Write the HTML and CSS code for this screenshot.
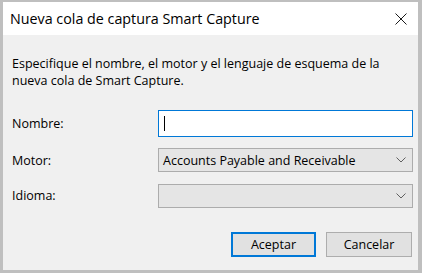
FILE: index.html
```html
<!DOCTYPE html>
<html lang="es">
<head>
    <meta charset="UTF-8">
    <title>Nueva cola de captura Smart Capture</title>
    <link rel="stylesheet" href="styles.css">
</head>
<body>
    <div class="dialog">
        <div class="titlebar">
            <span class="title">Nueva cola de captura Smart Capture</span>
            <button class="close-button" aria-label="Cerrar">
                <svg width="12" height="12" viewBox="0 0 12 12">
                    <path d="M0.5 0.5 L11.5 11.5 M11.5 0.5 L0.5 11.5" stroke="#1a1a1a" stroke-width="1" fill="none"/>
                </svg>
            </button>
        </div>

        <div class="content">
            <p class="description">Especifique el nombre, el motor y el lenguaje de esquema de la nueva cola de Smart Capture.</p>

            <div class="form">
                <label class="form-label" for="name-input">Nombre:</label>
                <div class="text-input" id="name-input"><span class="caret"></span></div>

                <label class="form-label">Motor:</label>
                <div class="select">
                    <span class="select-value">Accounts Payable and Receivable</span>
                    <svg class="chevron" width="10" height="6" viewBox="0 0 10 6">
                        <path d="M0.5 0.5 L5 5 L9.5 0.5" stroke="#606060" stroke-width="1" fill="none"/>
                    </svg>
                </div>

                <label class="form-label">Idioma:</label>
                <div class="select">
                    <span class="select-value"></span>
                    <svg class="chevron" width="10" height="6" viewBox="0 0 10 6">
                        <path d="M0.5 0.5 L5 5 L9.5 0.5" stroke="#606060" stroke-width="1" fill="none"/>
                    </svg>
                </div>
            </div>

            <div class="buttons">
                <button class="button button-default">Aceptar</button>
                <button class="button">Cancelar</button>
            </div>
        </div>
    </div>
</body>
</html>
```

FILE: styles.css
```css
* {
    box-sizing: border-box;
    margin: 0;
    padding: 0;
}

body {
    font-family: "Open Sans", "Liberation Sans", sans-serif;
    font-size: 12.5px;
    color: #000000;
    background-color: #ffffff;
    width: 424px;
    height: 273px;
}

.dialog {
    width: 422px;
    height: 273px;
    border-style: solid;
    border-color: #bfbfbf;
    border-width: 2px 4px 3px 3px;
    background-color: #f0f0f0;
    display: flex;
    flex-direction: column;
}

.titlebar {
    height: 33px;
    background-color: #ffffff;
    display: flex;
    align-items: center;
    justify-content: space-between;
    padding-left: 7px;
}

.title {
    font-size: 14.3px;
    color: #000000;
}

.close-button {
    width: 32px;
    height: 33px;
    border: none;
    background: none;
    display: flex;
    align-items: center;
    justify-content: center;
    margin-right: 1px;
}

.content {
    flex: 1;
    padding: 20px 0 0 9px;
    display: flex;
    flex-direction: column;
}

.description {
    line-height: 17px;
    width: 390px;
}

.form {
    margin-top: 21px;
    display: grid;
    grid-template-columns: 146px 255px;
    grid-template-rows: 27px 24px 24px;
    row-gap: 11px;
    align-items: center;
}

.form-label {
    line-height: 17px;
}

.text-input {
    height: 27px;
    background-color: #ffffff;
    border: 1px solid #0078d7;
    display: flex;
    align-items: center;
    padding-left: 5px;
}

.caret {
    width: 1px;
    height: 15px;
    background-color: #000000;
}

.select {
    height: 24px;
    background-color: #e5e5e5;
    border: 1px solid #acacac;
    display: flex;
    align-items: center;
    justify-content: space-between;
    padding: 0 6px 0 4px;
}

.select + .form-label,
.select + .form-label + .select {
    margin-top: 1px;
}

.chevron {
    flex-shrink: 0;
}

.buttons {
    margin-top: 25px;
    display: flex;
    justify-content: flex-end;
    gap: 10px;
    padding-right: 6px;
}

.button {
    width: 86px;
    height: 25px;
    font-family: inherit;
    font-size: 12.5px;
    color: #000000;
    background-color: #e1e1e1;
    border: 1px solid #adadad;
}

.button-default {
    width: 85px;
    border: 2px solid #0078d7;
}
```
